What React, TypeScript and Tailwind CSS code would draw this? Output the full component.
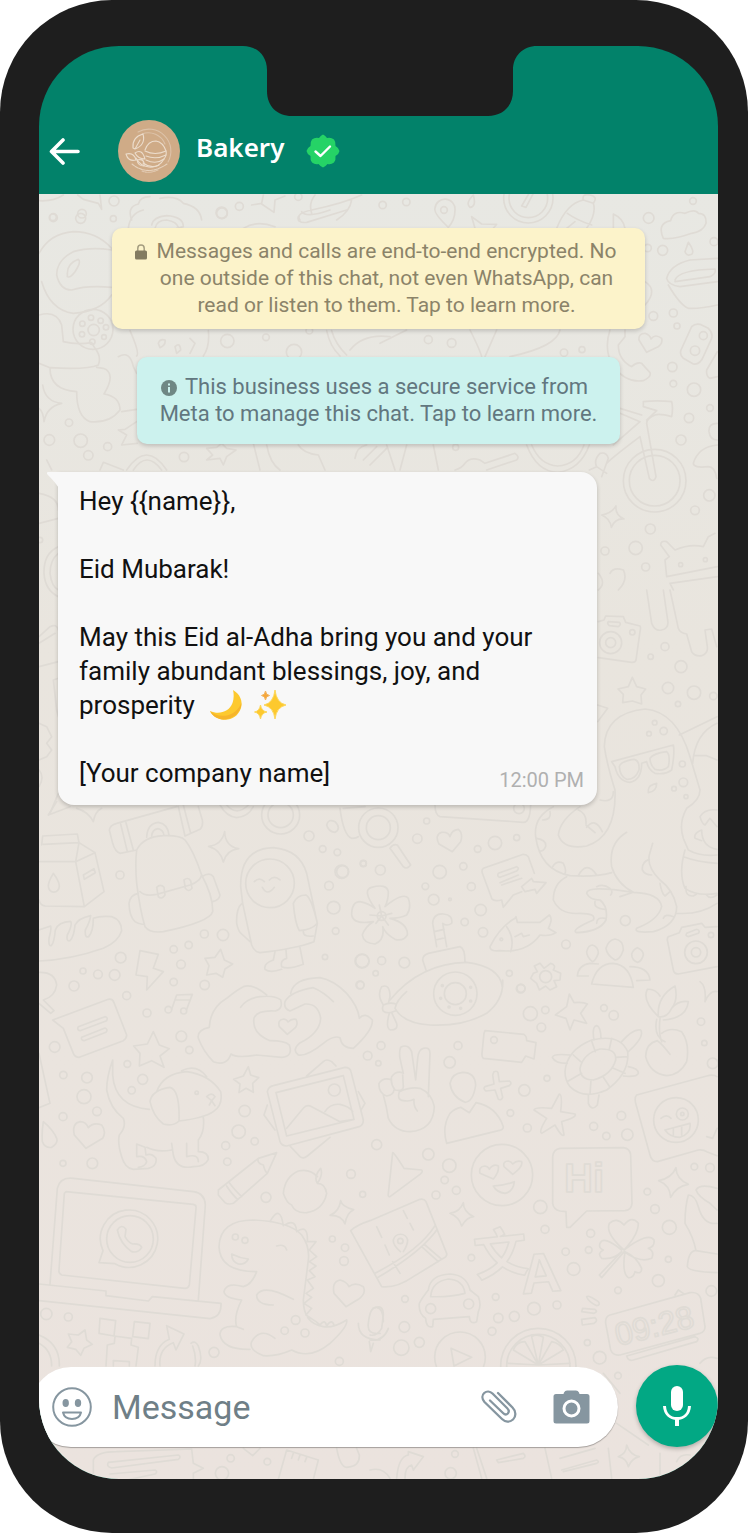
import React, { useState } from "react";

type Dot = [number, number, number];

type PatchProps = {
  x: number;
  y: number;
  dots: Dot[];
  d: string;
};

// every patch is drawn on a grid three times finer than the page
const Patch = ({ x, y, dots, d }: PatchProps) => (
  <g transform={`translate(${x} ${y}) scale(0.33333)`}>
    <path d={d} />
    {dots.map(([cx, cy, r], index) => (
      <circle key={index} cx={cx} cy={cy} r={r} />
    ))}
  </g>
);

const patches: PatchProps[] = [
  {
    x: 0,
    y: 0,
    dots: [[342, 603, 15], [246, 641, 13], [160, 653, 12], [665, 638, 17], [718, 619, 12], [895, 590, 11]],
    d: "M117 602Q160 605 190 585M233 585L250 598L295 610L305 628L300 585M395 660Q380 620 415 612Q420 590 450 590M480 595Q530 585 550 610Q600 620 605 660M755 615L785 610L790 585M785 612L822 637L825 600L855 588M935 640Q925 610 945 585M900 660Q885 640 935 630Q1030 610 1085 585M1055 600Q1050 635 1010 660",
  },
  {
    x: 30,
    y: 210,
    dots: [
      [69, 22, 10], [152, 25, 15], [250, 26, 9], [576, 10, 16], [191, 360, 17], [183, 323, 8], [212, 332, 8], [228, 352, 8],
      [222, 381, 7], [187, 395, 8], [156, 373, 8], [157, 341, 8], [592, 393, 20], [708, 382, 10], [838, 362, 10], [792, 426, 23],
      [117, 638, 11], [58, 690, 16], [152, 692, 20], [233, 710, 12], [175, 736, 14], [462, 741, 14], [189, 358, 60],
    ],
    d: "M27 130Q60 70 130 65Q200 65 245 115M35 215Q60 300 130 310Q210 305 245 255M245 120Q180 110 130 125Q80 150 80 195Q90 240 125 240Q170 225 245 232M112 190Q112 160 145 148Q155 155 135 185Q120 205 112 200ZM27 315Q80 300 95 345L100 395Q140 405 185 398L195 415Q215 440 205 465Q170 480 60 473L27 460M60 475Q60 540 140 545Q140 620 180 635Q240 640 270 600Q270 560 222 552Q260 490 220 475L200 472M265 440Q300 420 310 470L320 490M275 605L320 598M38 525Q45 575 95 580Q50 590 42 635Q40 605 27 595M295 55Q300 10 340 0M365 45Q370 20 410 17Q460 20 460 50L440 55M375 55Q380 30 410 30Q440 35 445 52M640 55Q680 30 735 50M805 20Q800 40 830 37L950 0M815 5Q830 25 900 0M300 362Q330 430 320 438M535 362Q540 410 520 438M385 400Q390 385 405 390Q408 405 390 413ZM435 410Q450 395 452 420L440 430ZM480 385L495 400L480 430M890 362Q900 410 930 438M905 362Q915 400 950 435M960 420Q1000 370 1080 380M265 660L285 658L320 635M265 660L290 675L275 705L322 700M530 715L548 735L530 750L570 745L580 765L590 740L618 720L590 715L575 700L560 712ZM210 780L220 757L280 780M290 780Q350 690 410 780M310 780Q350 720 395 780M670 700L690 780M710 705Q720 760 750 780M805 705Q820 730 865 735L885 780M975 745Q980 710 1010 705M1000 750L1040 710M1020 765L1070 715M50 750L65 780",
  },
  {
    x: 380,
    y: 190,
    dots: [
      [8, 45, 11], [79, 36, 11], [192, 60, 10], [445, 25, 74], [445, 25, 58], [806, 84, 16], [939, 33, 10], [848, 181, 15],
      [803, 174, 11], [1002, 155, 12], [820, 378, 13], [880, 369, 12], [891, 408, 9], [145, 449, 12], [215, 459, 13],
      [606, 479, 9], [552, 488, 11], [877, 531, 14], [880, 581, 10], [942, 599, 20], [990, 654, 10], [927, 684, 14],
      [903, 750, 15], [970, 437, 12], [945, 482, 14], [824, 872, 94], [824, 872, 76], [988, 916, 17], [945, 961, 13],
      [811, 1017, 15], [767, 1074, 20], [675, 1083, 12], [797, 1131, 12], [902, 1124, 6], [976, 1109, 6], [227, 772, 9],
    ],
    d: "M205 112Q160 70 165 55A30 30 0 0 1 225 60Q225 90 205 112M280 15Q290 50 270 52Q255 40 280 15M425 48L450 5L460 10L438 52ZM530 115Q560 40 610 30L640 40Q650 70 620 115M562 70Q590 90 635 105M610 30Q605 10 630 15Q655 20 640 40M560 115L585 95M285 115L275 80L305 102L350 103L340 115M700 115V72Q730 85 735 115M850 145Q830 100 872 92Q880 60 915 70Q945 55 955 70Q980 70 978 100Q970 125 935 130Q880 150 850 145ZM925 157Q945 185 935 193Q920 200 915 185ZM860 265Q870 225 930 210L1012 205M860 265Q865 285 900 290L1012 275M885 270Q895 240 1005 237Q1010 250 990 260L885 275M865 285Q900 345 925 355Q960 357 1012 345M795 275Q835 300 795 345M690 420Q670 480 700 530Q740 580 790 572Q815 560 810 548L785 520Q770 515 755 530Q715 510 715 465L735 440V420M800 487L777 450Q775 430 795 430Q810 435 813 447Q825 430 845 445Q850 465 825 475ZM935 410Q945 400 960 403L985 415Q1000 430 995 445L970 500Q960 525 940 522L910 505Q898 495 903 480ZM1012 485L980 540Q978 560 990 565L1012 560M720 655L785 675M720 670L780 695L700 765M790 635Q830 630 875 635Q880 655 875 680Q840 670 825 675Q800 685 800 700L828 860Q822 880 808 865L780 740Q700 800 680 820M790 635V650L830 662L800 690M628 840L650 830L680 850M650 830Q640 810 660 790Q680 785 685 805L665 860M440 765Q470 845 533 847Q600 840 628 765M455 765Q480 825 533 828Q590 825 612 765M270 420Q300 480 305 500M350 420L315 500M540 420Q530 470 390 500M0 460Q60 430 80 420M225 840Q245 835 255 820Q270 800 300 810L315 820L405 790Q420 800 410 810L320 840M160 765L175 840M80 765L60 840M20 765L45 840M1012 700Q985 700 987 725Q990 750 1012 750M1012 765Q955 770 940 820Q940 835 985 830Q1005 830 1010 865M708 948Q705 975 732 987Q705 985 694 1012Q690 985 665 975Q695 970 708 948ZM860 1160L855 1110L868 1100L842 1065Q842 1050 860 1055L885 1080Q930 1060 970 1070L985 1040L1005 1030M860 1160L1012 1130M870 1180L1012 1160M870 1180L880 1200M690 1150Q700 1130 730 1140Q745 1170 715 1200M655 1150Q680 1180 655 1200",
  },
  {
    x: 30,
    y: 460,
    dots: [[30, 240, 8]],
    d: "M27 100Q85 110 85 150M27 190L85 175M85 260Q40 280 42 340Q45 390 85 410M85 280Q60 300 60 340Q65 380 85 390M27 530L60 500Q80 490 85 510M27 550L75 520M27 620L85 605M85 655L70 660L80 750L85 770M27 790L50 800L65 830L50 850L65 870L50 890L27 900M27 930Q45 950 27 980M60 1060L85 1000",
  },
  {
    x: 340,
    y: 590,
    dots: [
      [812, 158, 33], [812, 158, 15], [877, 127, 8], [975, 170, 12], [932, 200, 8], [1023, 230, 18], [984, 294, 17],
      [1062, 308, 20], [1120, 318, 11], [1014, 342, 8], [944, 398, 7], [971, 423, 11], [927, 431, 7], [1027, 522, 9],
      [1030, 577, 13], [1002, 596, 7], [1038, 620, 6], [260, 693, 9], [232, 746, 14], [413, 777, 10], [465, 759, 20],
      [530, 743, 9], [70, 821, 9], [121, 840, 15], [370, 829, 11], [299, 846, 20], [256, 889, 10], [394, 890, 12],
      [281, 929, 16], [330, 928, 4], [422, 960, 17], [374, 996, 11], [429, 1027, 14], [678, 1063, 13], [856, 992, 15],
      [67, 1113, 20], [125, 1112, 12], [193, 1118, 16], [107, 1150, 8], [508, 1150, 9], [543, 1195, 12], [61, 1185, 11],
      [115, 713, 59], [115, 713, 36], [1068, 1087, 34], [1068, 1087, 14], [537, 655, 16], [617, 1160, 18], [1113, 1035, 8],
      [484, 1048, 4], [8, 845, 18], [125, 978, 13],
    ],
    d: "M775 95L792 90L797 78L850 80L857 97L900 108Q903 112 900 125L888 210Q886 218 875 217L775 203M805 95L838 97Q845 103 835 110L808 107Q800 100 805 95ZM920 0L935 100Q945 125 965 120Q988 115 983 90L970 0M990 0L1015 115Q1020 130 1040 132L1055 185Q1065 200 1085 197Q1105 190 1102 170L1095 120L1115 117L1130 170M877 262L890 290L917 297L903 315L905 342L877 333L848 338L850 313L834 297L865 290ZM825 600Q800 520 793 470Q795 370 915 357Q1010 365 1050 500L1080 600Q1080 630 1040 655Q1015 700 1030 745L1045 780Q1080 800 1131 795M820 605Q820 640 780 630M825 600Q830 740 740 768Q670 780 655 735Q660 690 720 650M640 650Q580 680 587 740Q600 840 690 857Q770 862 815 848M860 727Q805 760 815 830Q830 880 880 907Q740 885 740 910Q750 930 780 930Q805 950 798 990Q780 1025 710 1028Q690 1020 760 990Q770 970 720 970Q660 975 640 930Q640 880 680 860M840 920L880 907Q960 910 965 950Q955 990 890 1015Q880 1030 940 1025Q1010 1005 1010 950Q1000 900 960 870Q920 830 928 795L938 760M1018 435L1131 380M1058 520Q1065 430 1131 400M1065 497H1100L1131 510M1010 970Q1080 975 1131 940M608 690Q635 690 630 665M590 745Q620 750 617 770Q610 785 600 783M638 830Q650 810 670 820Q680 840 675 850M715 857Q740 810 770 855M715 660Q740 670 738 700M740 712Q765 680 787 725M738 705L765 728M928 808Q905 815 907 840Q915 855 935 855M960 880Q965 910 975 918L990 905M770 890Q790 880 810 895Q820 905 812 915M765 935Q760 955 795 958M770 1000Q770 980 795 985M970 985Q975 970 1000 980M815 515L1000 465Q1005 490 995 540Q975 555 945 550Q925 540 920 515L905 520Q905 570 870 577Q835 575 825 530ZM838 530Q840 515 880 508Q900 510 897 540Q885 570 860 568Q840 560 838 530ZM930 505Q940 490 980 485Q992 495 985 530Q970 545 945 538Q930 525 930 505ZM925 600Q925 585 950 580Q950 605 925 608ZM1085 720Q1085 770 1131 778M1131 660Q1095 655 1080 680Q1085 700 1095 705L1110 685L1131 710M1085 720Q1060 730 1065 745L1085 752M1035 780Q1015 850 1035 895Q1070 920 1131 910M1030 800Q1070 815 1131 820M1038 890Q1035 920 1060 918L1070 912M1100 915Q1110 930 1131 915M285 645Q285 675 300 680L550 697Q570 698 572 645M773 345L803 355L773 395M0 655Q10 735 35 745Q50 745 55 740M10 655L75 650M150 775L190 830Q200 840 212 825L172 765Q160 760 150 775M337 785L297 762Q283 735 305 727Q325 725 330 740Q335 720 355 718Q370 730 362 755ZM430 835L550 793Q560 793 565 800L583 850M430 835Q423 840 428 852L455 925Q460 935 485 930L490 952L520 915L545 905M475 850L530 830Q540 835 530 843L480 862Q470 860 475 850ZM480 878L535 855M485 885L545 865M545 890L575 865L580 875L618 878L590 910L585 898L555 905ZM105 955Q65 900 95 892Q140 880 145 905Q145 930 135 950Q190 905 205 925Q215 955 200 975Q180 985 150 985Q205 1000 202 1035Q190 1055 165 1048Q135 1030 128 1010Q135 1050 105 1062Q70 1060 67 1035Q75 1010 100 995Q40 1005 35 975Q35 935 60 935Q85 940 105 955ZM125 978L118 945M125 978L155 970M125 978L145 1005M125 978L108 1000M125 978L90 975M290 1070L278 1000Q280 970 310 972Q340 975 335 1000Q320 1010 308 1000L320 1070M283 1025L312 1018M287 1050L316 1043M258 1140L248 1110Q248 1095 265 1090L360 1070Q375 1075 375 1115M150 1230Q240 1120 380 1117Q480 1130 487 1190M450 1070Q480 1010 525 985L528 980L532 997H600L628 975Q640 985 625 1015L648 1028Q630 1040 600 1035Q560 1090 480 1082Q450 1085 450 1070ZM500 1010Q525 1045 512 1085M525 1040L545 1030L550 1040L568 1035M600 1120L612 1135L632 1120Q650 1125 640 1140L662 1150L660 1170L642 1172L650 1190L630 1200L617 1188L598 1200L590 1180L572 1165L580 1150L592 1145L583 1128ZM757 1065Q775 1070 775 1090Q765 1115 757 1115Q740 1100 740 1085Q745 1065 757 1065ZM825 1047Q850 1050 850 1080Q840 1110 825 1110Q800 1095 798 1075Q805 1050 825 1047ZM892 1073Q910 1080 910 1095Q905 1115 892 1117Q875 1110 875 1092Q880 1078 892 1073ZM755 1182Q770 1120 820 1120Q870 1125 880 1192ZM745 1158H712Q715 1125 750 1120L775 1122M870 1130Q925 1130 930 1170L890 1172M985 1040L1018 1028L1025 1012L1085 1000L1095 1012L1131 1010M985 1040Q980 1045 983 1055L1000 1140Q1002 1152 1015 1152L1131 1130M1040 1030L1070 1018Q1082 1022 1075 1030L1045 1040Q1035 1038 1040 1030Z",
  },
  {
    x: 30,
    y: 800,
    dots: [
      [270, 225, 12], [837, 108, 15], [878, 147, 10], [922, 157, 10], [1000, 190, 9], [935, 215, 20], [897, 257, 13],
      [911, 323, 19], [917, 393, 10], [885, 471, 8], [996, 483, 21], [990, 555, 12], [523, 402, 12], [579, 405, 17],
      [476, 435, 11], [431, 448, 11], [453, 493, 13], [431, 546, 11], [524, 555, 14], [272, 473, 16], [159, 513, 9],
      [204, 523, 13], [254, 525, 16], [132, 558, 15], [290, 587, 12], [351, 639, 12], [454, 709, 16], [478, 750, 11],
      [74, 741, 16], [1013, 767, 13], [720, 250, 73], [752, 45, 38], [752, 45, 57], [415, 629, 10], [461, 633, 9],
    ],
    d: "M27 185H137L147 128L142 102L38 108L35 135M40 133L147 128L195 158L222 275L163 320L45 318Q30 316 27 300M137 185L163 320M137 185L195 158M70 220Q55 245 55 258A16 18 0 0 0 88 258Q88 245 70 220ZM160 225L192 206L196 218L163 238ZM27 390L62 378Q65 385 57 415Q55 440 64 437Q72 430 76 390Q85 365 122 364Q128 375 112 405Q108 425 120 422Q132 410 135 375Q145 355 182 347Q180 365 166 390Q164 415 176 410Q190 395 190 355Q210 347 245 350Q275 360 275 392Q265 425 220 445Q120 480 27 483M320 150Q340 110 400 107Q450 105 465 120Q490 150 515 225Q550 290 548 335Q540 365 400 395Q360 400 345 380Q330 330 320 250Q315 190 320 150ZM330 275Q345 290 380 283L480 255Q510 245 515 225M325 280Q300 285 297 310Q298 350 315 365Q330 375 343 372M515 230Q540 215 550 230L570 285Q568 300 548 305M380 262Q392 250 402 262L405 285Q395 300 385 290ZM462 240Q474 230 482 242L486 265Q476 278 466 265ZM320 150L270 160Q255 155 248 130L238 90Q240 75 260 70L440 20M445 20L465 108L510 88Q520 80 517 60L505 20M272 72L292 155M288 68L310 150M350 112Q352 70 385 67Q415 72 417 107M365 108Q367 88 384 86Q400 90 402 106M460 15L482 100M55 45L80 5M55 45L120 20M570 15Q590 50 620 53Q655 50 670 20M590 15Q620 50 655 15M140 25Q175 35 190 65Q195 35 215 25M584 95Q585 138 626 146Q590 150 580 186Q572 150 536 139Q575 135 584 95ZM632 260Q630 145 730 143Q810 150 830 220L862 370L852 425Q800 445 690 458Q672 455 665 435L638 310ZM636 310Q618 325 620 370Q625 395 635 402L660 425M790 310Q800 285 828 285Q845 295 862 370Q845 390 808 392Q795 370 790 310M820 395Q820 412 850 408M735 455L730 480Q700 490 705 508Q720 520 755 508M768 450L770 475Q750 480 755 500Q775 510 820 493L810 443M673 245Q688 230 703 245M718 240Q733 225 750 240M697 262Q712 290 733 262M890 75Q895 55 915 65Q935 85 915 97Q895 95 890 75ZM330 452L385 463L370 505L400 515L350 570L352 530L318 525ZM572 448L583 480L608 492L585 507L578 532L558 520L530 525L537 497L525 475L555 472ZM440 585L487 583L470 628M436 600L480 600M440 585L425 628M370 695L388 735L418 746L390 768L402 802L365 782L328 798L330 760L311 738L352 732ZM68 660L235 598Q248 595 252 608L290 705Q290 715 280 722L148 772Q135 772 130 760L100 685ZM145 680L225 650Q235 652 230 662L150 692Q140 690 145 680ZM155 712L225 684Q235 688 228 697L162 722Q152 720 155 712ZM27 517Q75 515 80 555Q75 590 40 600L72 632L62 640L27 610M710 585Q670 550 640 560Q620 570 590 595Q540 625 538 682Q500 690 505 715Q520 755 550 785Q590 800 603 762Q620 775 680 765L755 772Q790 770 778 735Q765 722 720 722Q665 700 672 655Q680 630 735 633Q760 628 752 600Q735 585 690 590Q650 595 632 622M782 580Q790 535 870 533Q910 540 950 580Q985 620 988 655Q1005 635 1027 660Q1030 690 970 745Q935 745 930 713Q910 705 880 730Q830 770 805 765Q785 750 808 730Q870 700 872 655Q865 610 825 612L780 633Q760 625 765 605Q780 575 850 563Q880 575 910 605M772 703L748 680Q742 660 760 657Q770 658 774 666Q785 655 798 658Q805 670 797 682ZM655 800L662 825L686 833L668 850L670 877L648 865L627 878L630 852L611 838L640 828Z",
  },
  {
    x: 370,
    y: 980,
    dots: [
      [452, 26, 13], [481, 101, 21], [526, 90, 11], [514, 142, 13], [702, 84, 10], [731, 106, 14], [993, 125, 11],
      [1003, 189, 8], [264, 197, 12], [239, 247, 17], [33, 197, 12], [25, 250, 8], [531, 295, 9], [463, 331, 17],
      [421, 399, 10], [472, 444, 12], [372, 180, 10], [754, 407, 13], [671, 439, 12], [709, 468, 11], [772, 464, 17],
      [20, 494, 15], [175, 523, 17], [238, 557, 20], [224, 600, 11], [259, 631, 12], [198, 645, 12], [396, 585, 92],
      [511, 681, 20], [525, 748, 12], [918, 420, 67], [937, 402, 18], [937, 402, 5], [973, 560, 10], [1020, 563, 13],
      [832, 635, 10], [855, 687, 13], [898, 742, 21], [662, 760, 12], [656, 810, 10], [587, 815, 11], [611, 867, 19],
      [304, 833, 10], [895, 838, 9], [256, 41, 65], [256, 41, 33], [91, 783, 8], [1028, 250, 16], [217, 17, 3],
      [212, 55, 3], [237, 81, 3], [272, 85, 3], [302, 63, 3], [302, 22, 3],
    ],
    d: "M75 85Q80 60 110 35M398 0Q402 60 350 100Q280 140 180 135Q100 130 75 85M40 75Q20 45 35 20Q60 10 60 50L55 70M40 75Q30 100 60 98L78 92M40 75Q60 65 78 72M58 100Q45 145 62 150Q85 150 80 130L65 98M598 42L612 68Q640 65 652 72L632 100L650 130L612 120L600 150L588 115L556 105L590 80ZM345 152L462 163Q470 168 470 182L498 188L492 237L467 228L455 247L340 235Q335 230 336 220L342 160ZM175 350L180 220Q180 200 160 205Q145 210 143 235L137 300L125 215Q115 190 92 202Q87 215 90 235L100 280Q80 270 65 290Q60 310 75 330Q100 335 100 320L98 285M65 300Q40 290 27 310Q25 340 50 348Q70 345 72 330M40 345Q50 380 55 415Q75 455 120 455Q190 450 193 380Q185 340 150 325Q120 320 88 335Q80 360 100 362Q120 365 132 358Q130 380 142 393M278 277Q315 277 317 315Q310 365 285 367Q245 350 240 310Q245 280 278 277ZM230 490Q215 440 240 400Q255 385 272 382L298 398L318 368Q380 380 400 440Q400 450 385 452ZM372 275Q385 270 385 285L388 305L418 303Q428 310 418 317L392 325L398 352Q395 362 385 358L375 330L348 333Q338 325 345 320L372 312L368 285ZM568 342Q578 345 572 395L615 402Q622 412 575 425L582 465Q575 472 555 435L515 460Q505 455 530 415L492 390Q495 380 545 385ZM585 275Q590 210 665 180Q750 160 773 215Q780 280 710 330Q640 360 600 320Q585 300 585 275ZM630 265Q640 220 690 207Q740 205 737 240Q725 285 670 300Q630 300 630 265ZM610 225L632 245M665 183L676 215M725 175L718 207M772 230L738 232M765 280L730 265M720 322L700 292M660 343L663 300M595 303L635 280M672 180Q665 140 680 137Q692 140 693 175M755 185Q790 145 812 150Q825 170 775 215M775 260Q805 265 805 280Q800 292 760 288M655 343V370Q665 395 682 375L687 345M592 250Q555 250 547 232Q550 220 600 225M865 110Q815 60 832 28Q855 25 870 48M865 110Q860 50 915 18Q925 60 905 85Q890 115 865 110ZM905 85Q925 60 955 65Q950 115 880 120M860 118Q850 170 885 185M870 115Q865 160 875 185M875 160Q900 140 935 155Q960 190 950 245Q930 285 890 287Q840 280 827 230Q828 190 862 182Q875 190 900 223M800 345L1010 288Q1030 282 1041 290M800 345Q793 352 797 370L840 525Q845 545 862 545L985 510Q1000 508 1010 515L1041 527M873 415Q890 400 903 415M885 450L960 430Q965 460 930 472Q900 472 885 450ZM910 447V465M935 440V465M1010 470L1028 475L1041 445M68 518Q70 515 102 565L155 570Q160 575 150 583L60 650Q53 652 55 640ZM370 597L330 580Q325 560 345 558Q355 560 358 568Q370 550 385 558Q388 575 370 597ZM428 583L402 560Q398 543 415 543Q425 545 428 552Q440 540 455 545Q460 560 428 583ZM370 618Q400 618 433 605Q430 635 405 640Q380 637 370 618ZM570 505L760 503Q780 505 782 525L786 670Q784 690 765 692L650 693L600 742H590L588 695L570 693Q550 688 548 670V530Q550 508 570 505ZM280 668Q280 695 311 710Q290 712 275 738Q268 712 240 700Q270 695 280 668ZM918 563Q918 595 955 613Q920 618 902 652Q900 615 866 602Q905 595 918 563ZM0 722L150 658Q162 655 168 665L230 820Q232 830 220 835L130 890Q80 925 35 920L-58 752Q-40 735 0 722M195 737Q150 810 15 880M202 748Q150 820 22 893M155 800L205 845M165 795L212 835M20 740L35 772M45 795L58 825M68 845L90 880M100 692L112 715M120 730L130 750M91 815Q68 795 70 780A22 22 0 0 1 113 780Q113 795 100 815M762 810Q705 760 718 730Q740 710 762 735Q785 705 805 730Q805 765 762 810M762 810Q835 755 852 780Q855 800 835 805Q855 815 845 835Q810 850 762 815M755 810Q700 765 690 790Q685 805 700 810Q680 820 695 835Q730 840 755 815M765 815Q755 880 775 893Q790 895 795 875Q815 885 815 865Q800 830 765 815M760 818L695 893L688 885L755 815M1041 625Q990 610 978 630Q985 650 1020 670L1041 690M1041 730Q1000 735 985 680Q975 645 955 645Q945 680 945 730Q970 770 978 812L1041 822M975 812Q955 815 952 860Q955 875 1041 878M990 5Q1010 20 1005 65Q1020 30 1041 35",
  },
  {
    x: 30,
    y: 1060,
    dots: [
      [292, 12, 10], [100, 45, 11], [171, 53, 16], [338, 58, 15], [305, 91, 11], [162, 110, 21], [201, 154, 13],
      [99, 170, 12], [99, 310, 9], [187, 310, 16], [644, 153, 17], [626, 215, 20], [674, 244, 11], [587, 257, 12],
      [592, 305, 11], [708, 412, 15], [963, 342, 13], [998, 403, 9], [913, 90, 18], [300, 537, 70], [907, 537, 9],
      [945, 563, 11], [942, 603, 13], [616, 531, 9], [645, 541, 9], [797, 780, 13], [764, 812, 11], [825, 819, 12],
      [49, 762, 17], [115, 771, 12], [552, 877, 15], [928, 904, 12], [500, 98, 5],
    ],
    d: "M248 0Q230 50 230 90Q240 145 280 175Q290 200 268 225Q262 250 275 290Q285 325 310 328L355 325Q382 318 378 295Q365 278 348 285L345 262L320 252V290Q345 285 350 305Q345 320 325 322M248 0V45Q255 140 358 148M380 95Q400 40 470 35Q540 45 572 95Q580 135 550 155Q520 175 447 183M360 125Q365 90 420 82Q450 90 447 183Q430 200 400 192Q370 170 360 125M520 172Q525 215 505 240V275Q535 275 535 298Q525 320 490 320Q440 330 430 285L425 250M470 250V290Q505 280 505 305M350 262Q380 278 425 270M455 32Q500 10 530 50M530 110Q545 95 555 110L545 122ZM545 122L538 135M545 122L555 137M168 265L133 225Q125 190 150 185Q168 185 175 203Q190 185 215 195Q230 215 218 235ZM40 185Q35 215 37 245Q45 265 65 262Q85 250 80 235Q70 210 40 185ZM27 -20L60 130L27 143M712 95Q715 80 730 77L945 22Q960 22 963 35L1000 180Q1000 195 988 200L770 258Q755 258 750 245ZM738 98L940 47L972 178L770 228ZM770 205L820 145Q830 132 845 140L930 185L972 178M885 155Q900 130 930 133Q960 140 968 155M830 48L880 5Q890 -5 905 5L918 18M985 95L1005 130L993 150M780 258L810 290Q820 298 832 288L900 232M712 135L702 165L735 210M565 390L685 295L740 278L712 340L610 430Q595 435 585 428L565 405ZM685 295Q680 310 700 315Q705 335 712 340M598 368Q610 385 635 410M590 378Q600 395 622 418M862 350Q840 325 805 333Q765 350 760 400Q770 430 785 435Q795 460 830 458Q880 450 890 400Q885 370 862 370Q850 350 872 325Q880 345 862 370M932 422Q935 440 971 449Q950 458 945 492Q935 465 900 466Q928 455 932 422ZM60 672L82 385Q90 350 130 355L490 395Q525 400 526 435L505 720M108 395L490 433Q500 435 498 445L478 675Q475 685 465 685L95 645Q85 640 87 630L103 400ZM27 672L228 693V707L355 723L367 710L573 730Q575 770 540 776L27 722M207 608L219 572A86 86 0 1 1 255 611ZM262 510Q275 490 288 508L285 530Q295 548 308 552Q330 550 335 562Q325 580 305 575Q270 550 262 510ZM680 635Q665 675 640 680Q590 665 582 695Q585 715 635 720Q610 770 620 800Q570 795 570 825Q580 870 660 868M680 635Q570 635 567 560Q570 480 670 480Q780 485 815 525Q840 560 835 600L820 720Q820 790 880 800Q910 805 950 780Q955 800 900 850Q840 900 785 870Q740 890 700 887Q655 870 665 845Q690 800 735 835M620 800L640 808M720 485Q750 430 760 497M765 495Q795 475 800 512M800 515Q835 490 832 545L858 545L838 570L860 590L838 605L858 618L838 632L855 650L832 660L850 685L828 700L845 712L822 730L845 745L828 765L858 785L870 795Q885 775 890 798Q905 775 912 795M790 718Q700 670 680 705Q680 735 730 735M740 558Q765 550 770 570M605 582Q630 595 655 597Q645 615 625 612Q605 605 605 582ZM948 740L912 700Q905 665 930 660Q950 665 957 680Q975 665 1000 680Q1010 700 985 718ZM165 810L170 840L187 853L162 865L152 886L137 868L112 862L125 845L115 822L145 825ZM210 775L257 782L252 828L207 820ZM313 785L360 790L355 836L308 830ZM252 828L305 835L303 855L325 862L318 918M255 828L253 850L232 855L228 918M250 918V902L298 905V918M410 797L462 822L438 870L430 848Q385 865 390 918M410 797L418 838Q375 855 375 918M483 850Q495 840 505 858Q520 900 505 918M488 858Q500 890 495 918M1015 790Q1020 740 1040 742Q1060 745 1060 785M1015 790Q1010 825 1050 820M985 790Q985 840 1050 840M1018 845L1022 875L1030 850M27 825Q90 850 88 918M27 850Q65 870 65 918",
  },
  {
    x: 370,
    y: 1240,
    dots: [
      [377, 171, 10], [105, 177, 10], [182, 206, 15], [296, 192, 15], [492, 206, 19], [561, 195, 12], [385, 234, 14],
      [433, 229, 15], [366, 274, 12], [103, 261, 16], [94, 323, 23], [148, 307, 15], [270, 352, 76], [744, 151, 10],
      [865, 122, 18], [1024, 153, 16], [652, 308, 9], [689, 353, 19], [744, 407, 10], [255, 642, 10], [242, 700, 17],
      [505, 378, 113], [505, 378, 95],
    ],
    d: "M175 150Q180 105 240 102Q290 105 300 150L325 170Q335 195 325 215L320 245Q300 255 298 230L190 238L188 260Q168 265 167 235Q145 220 148 190Q155 175 175 150M182 170Q185 125 235 117Q280 120 285 160Q240 172 182 170M243 325L305 352L252 378ZM505 375L485 290Q500 280 520 292ZM505 375L430 330Q440 305 465 305ZM505 375L545 305Q570 310 580 330ZM505 375L415 370M505 375L600 370M650 170Q655 165 685 185Q692 195 680 197Q655 185 650 170ZM638 205L675 208Q685 215 672 220L635 215ZM635 238L675 233Q685 242 672 250L637 255ZM720 225L960 158Q985 155 992 175L1005 260Q1005 275 990 280L750 345Q730 348 722 330L707 250Q705 230 720 225ZM770 348L975 290Q990 295 980 305L790 360Q775 365 770 348M915 165L925 150L940 160M10 205Q40 190 40 225L35 265Q20 290 0 285M55 265Q40 305 0 300M990 370Q1010 345 1041 355M700 400L750 460M740 550L835 615M310 625L335 715M320 625L350 715M380 660L460 640Q470 650 460 655L385 668ZM525 625L545 715M570 655L675 625M575 690L680 660Q690 665 680 670L580 695M715 625L725 715M770 615Q780 645 808 650Q785 655 775 680Q770 655 745 650Q770 640 770 615ZM80 715Q85 650 115 645V635L160 650L130 690L125 675Q105 680 105 715M0 690Q40 680 60 715M870 640V715M920 665Q930 640 960 645",
  },
  {
    x: 30,
    y: 1340,
    dots: [[602, 355, 11], [712, 365, 10], [576, 400, 20]],
    d: "M190 418V360Q200 335 260 335L485 327L490 370L520 385L490 400V418M235 367Q228 380 245 384L445 358Q455 350 445 345ZM240 402L375 390Q385 395 375 402L300 418M770 330L865 360L850 418M770 330L745 418M790 340L785 355M810 345L805 360M830 352L825 365M920 325Q930 380 950 382Q990 380 988 345L980 325M640 325L668 347L690 325",
  },
];

const Wallpaper = () => (
  <svg
    aria-hidden="true"
    viewBox="39 194 679 1285"
    preserveAspectRatio="xMidYMin slice"
    className="absolute inset-0 h-full w-full"
    fill="none"
    stroke="#dfdbd5"
    strokeWidth="5"
    strokeLinecap="round"
    strokeLinejoin="round"
  >
    {patches.map((patch, index) => (
      <Patch key={index} {...patch} />
    ))}
    <g strokeWidth="1.6" className="font-['Liberation_Sans','Noto_Sans_CJK_SC',sans-serif]">
      <text x="564" y="1192" fontSize="40" fontWeight="700">Hi</text>
      <text x="0" y="0" fontSize="54" fontWeight="700" transform="translate(476 1276) rotate(-6)">文</text>
      <text x="0" y="0" fontSize="56" fontWeight="700" transform="translate(522 1294) rotate(-5)">A</text>
      <text x="0" y="0" fontSize="32" transform="translate(618 1346) rotate(-14)">09:28</text>
    </g>
  </svg>
);

const Notch = () => (
  <svg aria-hidden="true" viewBox="0 0 294 70" className="ml-[204px] h-[70px] w-[294px] shrink-0" fill="#1e1e1e">
    <path d="M0 0C14 0 24 10 24 24V45C24 60 34 70 49 70H245C260 70 270 60 270 45V24C270 10 280 0 294 0Z" />
  </svg>
);

const BakeryLogo = () => (
  <svg role="img" aria-label="Bakery logo" viewBox="0 0 62 62" className="ml-[38px] size-[62px] shrink-0">
    <circle cx="31" cy="31" r="31" fill="#cfab87" />
    <g fill="none" stroke="#ecdccb" strokeWidth="1.1" strokeLinecap="round" strokeLinejoin="round">
      <path d="M20 12A22 22 0 0 1 50 42" opacity="0.5" />
      <path d="M24 14A18 18 0 0 1 47 24" opacity="0.5" />
      <path d="M15 28Q14 17 25 14Q28 25 17 29ZM17 29L22 20" />
      <path d="M27 30Q30 21 38 21Q45 22 48 31Q49 35 46 39Q41 48 31 47Q22 46 18 38" />
      <path d="M27 31Q37 36 48 31M28 36Q38 40 48 35M28 40Q38 45 46 39M25 43Q33 49 41 45" />
      <path d="M8 34Q16 32 18 40Q10 42 8 34ZM17 33Q24 28 27 39Q20 39 17 33ZM19 40Q27 38 26 46Q20 46 19 40Z" />
      <path d="M14 44Q30 57 49 44" strokeDasharray="3 1" opacity="0.8" />
      <path d="M24 51Q31 54 40 50" strokeDasharray="2 1" opacity="0.6" />
    </g>
  </svg>
);

const Verified = () => (
  <svg role="img" aria-label="Verified" viewBox="0 0 34 34" className="ml-[22px] size-[34px] shrink-0">
    <path
      d="M17 0.500Q19 1 21 4Q25 3 28 5.500Q30 8 29.500 12Q33 14 33.500 17Q33 20 29.500 22Q30 26 28 28.500Q25 31 21.500 30Q19 33 17 33.500Q15 33 12.500 30Q9 31 6 28.500Q4 26 4.500 22Q1 20 0.500 17Q1 14 4.500 12Q4 8 6 5.500Q9 3 13 4Q15 1 17 0.500Z"
      fill="#25d366"
    />
    <path d="M9.500 17.500L14.500 22L24 12.500" fill="none" stroke="#fff" strokeWidth="2.400" strokeLinecap="round" strokeLinejoin="round" />
  </svg>
);

const Moon = () => (
  <svg role="img" aria-label="crescent moon" viewBox="0 0 34 32" className="ml-2 inline-block h-8 w-[34px] align-[-7px]">
    <path d="M24 1C31 5 34 12 32 19C29 28 21 32 13 30.500C7 29.500 3 26 1 22C10 26 20 23 23.500 14C25 9.500 25 5 24 1Z" fill="#fdc92e" />
    <path d="M32.500 14C32 24 23 31 13 30.500C7 29.500 3 26 1 22C8 29 25 30 32.500 14Z" fill="#f6b52b" />
  </svg>
);

const Sparkles = () => (
  <svg role="img" aria-label="sparkles" viewBox="0 0 32 30" className="ml-1 inline-block h-[30px] w-8 align-[-6px]">
    <path d="M21 0Q22.500 13 32 15Q22.500 17 21 29Q19.500 17 10 15Q19.500 13 21 0Z" fill="#fdc92e" stroke="#fdd75c" />
    <path d="M11.500 1Q12 5 15.500 5.500Q12 6 11.500 10Q11 6 7.500 5.500Q11 5 11.500 1Z" fill="#f4a73b" stroke="#f4b35c" />
    <path d="M6.500 15Q7.500 21 13 22Q7.500 23 6.500 29Q5.500 23 0.500 22Q5.500 21 6.500 15Z" fill="#fdc92e" stroke="#fdd75c" />
  </svg>
);

const App = () => {
  const [message, setMessage] = useState("");

  return (
    <main className="flex min-h-screen flex-col rounded-[112px] bg-[#1e1e1e] pt-[46px] pr-[30px] pb-[54px] pl-[39px] font-['Roboto',sans-serif]">
      <div className="flex flex-1 flex-col overflow-hidden rounded-[80px] bg-[#02826a]">
        <header>
          <Notch />
          <div className="flex h-[78px] items-center pb-2 pl-[10px]">
            <button type="button" aria-label="Back">
              <svg viewBox="0 0 31 27" className="h-[27px] w-[31px]" fill="none" stroke="#fff" strokeWidth="3.6" strokeLinecap="round" strokeLinejoin="round">
                <path d="M14 2L2.500 13.500L14 25M2.500 13.500H29" />
              </svg>
            </button>
            <BakeryLogo />
            <h1 className="ml-4 pb-2 font-['Noto_Sans',sans-serif] text-[26px] leading-9 font-semibold text-white">
              Bakery
            </h1>
            <Verified />
          </div>
        </header>

        <div className="relative flex flex-1 flex-col bg-linear-to-b from-[#e8e8e3] via-[#e9e5de] via-35% to-[#ebe3de]">
          <Wallpaper />

          <section className="relative flex flex-1 flex-col items-center gap-7 pt-[34px] pb-8">
            <p className="w-[533px] rounded-[10px] bg-[#fcf3ca] py-[10px] pr-0 pl-4 text-center text-[21px] leading-[27px] text-[#8b8369] shadow-[0_2px_4px_rgba(0,0,0,0.18)]">
              <svg aria-hidden="true" viewBox="0 0 12 16" className="mr-[10px] -ml-[22px] inline-block h-4 w-3 align-[-2px]">
                <path d="M2.800 7V4.200A3.200 3.200 0 0 1 9.200 4.200V7" fill="none" stroke="#a59d80" strokeWidth="1.500" />
                <rect x="0" y="6.500" width="12" height="9" rx="1.500" fill="#837b61" />
              </svg>
              Messages and calls are end-to-end encrypted. No
              <br />
              one outside of this chat, not even WhatsApp, can
              <br />
              read or listen to them. Tap to learn more.
            </p>

            <p className="w-[483px] rounded-[10px] bg-[#ccf2ee] pt-4 pb-[17px] text-center text-[22px] leading-[27px] text-[#62777f] shadow-[0_2px_4px_rgba(0,0,0,0.18)]">
              <svg aria-hidden="true" viewBox="0 0 16 16" className="mr-2 -ml-2 inline-block size-4 align-[-2px]">
                <circle cx="8" cy="8" r="8" fill="#6f8784" />
                <path d="M8 7V12.500M8 3.500V5.500" stroke="#ccf2ee" strokeWidth="2" />
              </svg>
              This business uses a secure service from
              <br />
              Meta to manage this chat. Tap to learn more.
            </p>

            <article className="relative ml-[19px] w-[539px] self-start rounded-2xl rounded-tl-none bg-[#f8f8f8] pt-3 pr-[13px] pb-[15px] pl-[21px] text-[26px] leading-[34px] text-[#111] shadow-[0_2px_4px_rgba(0,0,0,0.2)]">
              <svg aria-hidden="true" viewBox="0 0 12 17" className="absolute top-0 -left-[11px] h-[17px] w-3" fill="#f8f8f8">
                <path d="M1 0H12V17Q11 13 0 2Q-0.500 0 1 0Z" />
              </svg>
              <p className="mb-[34px]">Hey {"{{name}}"},</p>
              <p className="mb-[34px]">Eid Mubarak!</p>
              <p>
                May this Eid al-Adha bring you and your
                <br />
                family abundant blessings, joy, and
              </p>
              <p className="mb-[34px] h-[34px]">
                prosperity <Moon /> <Sparkles />
              </p>
              <div className="flex items-end justify-between">
                <p>[Your company name]</p>
                <time className="text-xl leading-5 text-[#b0b0b0]">12:00 PM</time>
              </div>
            </article>
          </section>

          <form className="relative -ml-2 flex items-end gap-[18px] pb-8" onSubmit={(e) => e.preventDefault()}>
            <div className="flex h-20 min-w-0 flex-1 items-center rounded-full bg-white pr-7 pl-[21px] shadow-[0_1px_1px_rgba(0,0,0,0.3)]">
              <button type="button" aria-label="Emoji" className="shrink-0">
                <svg viewBox="0 0 40 40" className="size-10" fill="#8696a0">
                  <circle cx="20" cy="20" r="18.800" fill="none" stroke="#8696a0" strokeWidth="2" />
                  <ellipse cx="13.700" cy="16" rx="3.200" ry="3.900" />
                  <ellipse cx="26" cy="16" rx="3.200" ry="3.900" />
                  <path d="M11 25.500H29Q27.500 32 20 32Q12.500 32 11 25.500Z" fill="none" stroke="#8696a0" strokeWidth="2" strokeLinejoin="round" />
                </svg>
              </button>
              <input
                type="text"
                aria-label="Message"
                placeholder="Message"
                value={message}
                onChange={(e) => setMessage(e.target.value)}
                className="ml-5 min-w-0 flex-1 bg-transparent text-[34px] leading-10 text-[#3b4a54] outline-none placeholder:text-[#6f7f87]"
              />
              <button type="button" aria-label="Attach" className="shrink-0">
                <svg viewBox="0 0 36 34" className="h-[34px] w-9" fill="none" stroke="#8696a0" strokeWidth="2.300" strokeLinecap="round">
                  <path d="M17 3L31.500 17.500C35.500 21.500 35 26.500 32 29.500C28.500 32.500 24 32 21 29L3.500 12C0.500 8.500 1 5 3.200 3C5.500 1 9 1 11.500 3.500L26 18C28 20 28.200 22 26.800 23.500C25.300 25 23.500 24.500 22 23L9 10.500" />
                </svg>
              </button>
              <button type="button" aria-label="Camera" className="ml-9 shrink-0">
                <svg viewBox="0 0 37 34" className="h-[34px] w-[37px]">
                  <path d="M11 2.500Q12 0.500 14 0.500H23Q25 0.500 26 2.500L26.500 4H34Q36.500 4 36.500 6.500V31Q36.500 33.500 34 33.500H3Q0.500 33.500 0.500 31V6.500Q0.500 4 3 4H10.500Z" fill="#8696a0" />
                  <circle cx="18.500" cy="18.500" r="7.500" fill="none" stroke="#fff" strokeWidth="3" />
                </svg>
              </button>
            </div>
            <button
              type="button"
              aria-label="Record voice message"
              className="flex size-[82px] shrink-0 items-center justify-center rounded-full bg-[#02a884] shadow-[0_2px_4px_rgba(0,0,0,0.25)]"
            >
              <svg viewBox="0 0 28 40" className="h-10 w-7" fill="none" stroke="#fff">
                <rect x="8" y="0" width="12" height="25" rx="6" fill="#fff" stroke="none" />
                <path d="M1.500 20C2 28 7 32.500 14 32.500C21 32.500 26 28 26.500 20" strokeWidth="3" />
                <path d="M14 32V40" strokeWidth="4" />
              </svg>
            </button>
          </form>
        </div>
      </div>
    </main>
  );
};

export default App;
